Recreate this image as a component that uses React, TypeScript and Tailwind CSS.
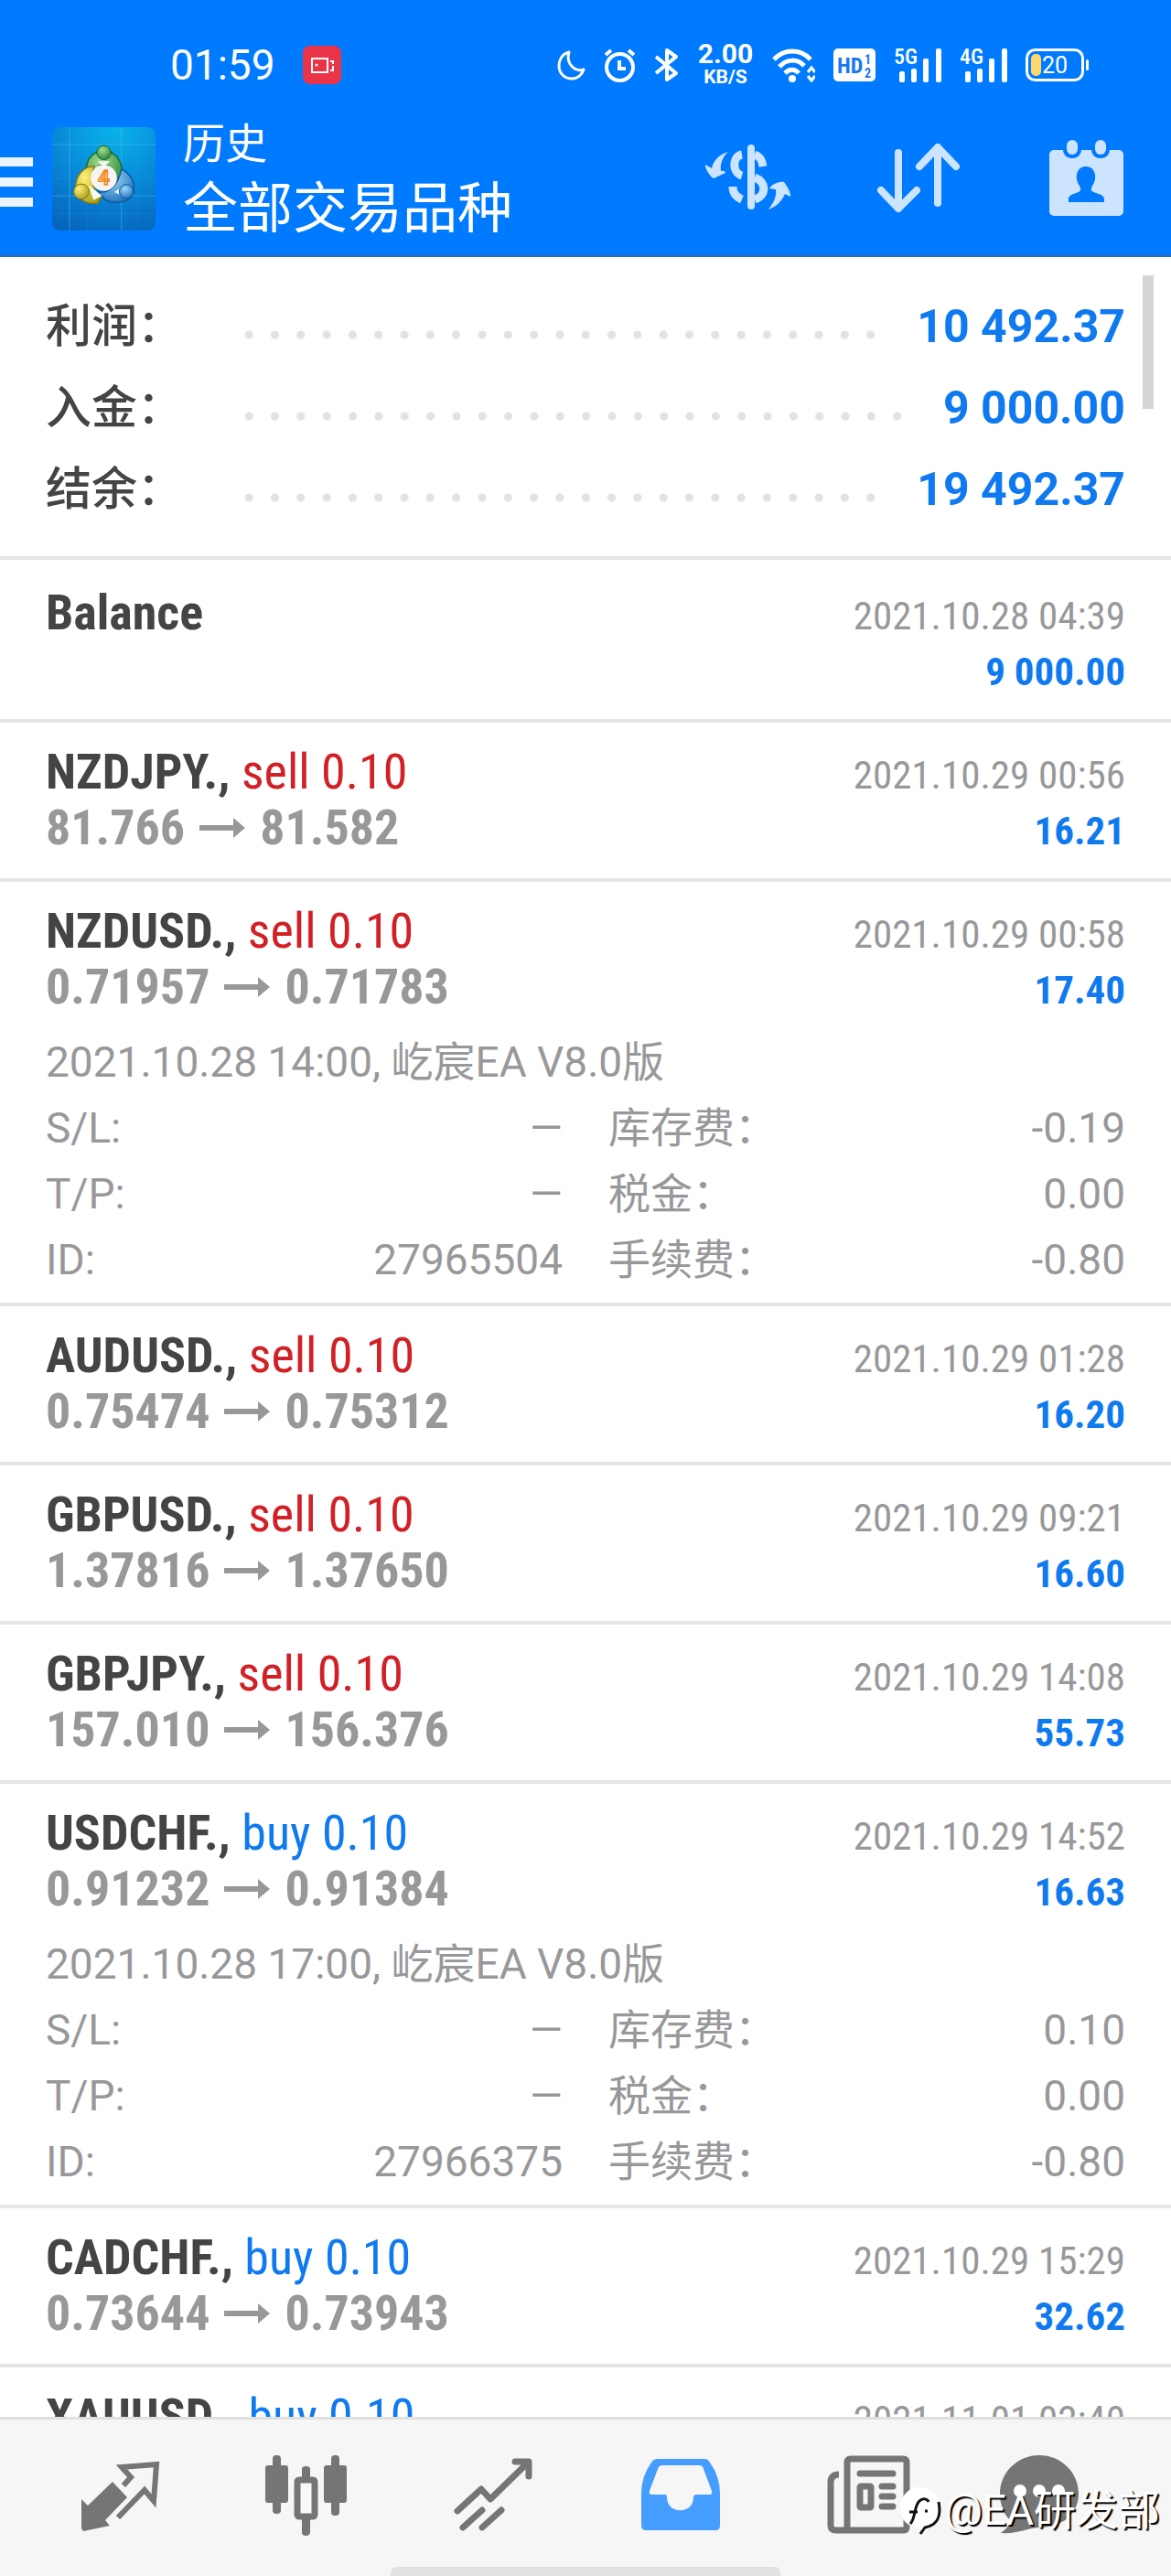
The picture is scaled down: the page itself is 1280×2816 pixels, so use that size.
import type { ReactNode } from "react"

type Detail = {
  opened: string
  id: string
  swap: string
  taxes: string
  commission: string
}

type Deal = {
  symbol: string
  side?: "buy" | "sell"
  volume?: string
  from?: string
  to?: string
  time: string
  profit: string
  detail?: Detail
}

const summary = [
  { label: "利润：", value: "10 492.37" },
  { label: "入金：", value: "9 000.00" },
  { label: "结余：", value: "19 492.37" },
]

const deals: Deal[] = [
  { symbol: "Balance", time: "2021.10.28 04:39", profit: "9 000.00" },
  { symbol: "NZDJPY.", side: "sell", volume: "0.10", from: "81.766", to: "81.582", time: "2021.10.29 00:56", profit: "16.21" },
  {
    symbol: "NZDUSD.",
    side: "sell",
    volume: "0.10",
    from: "0.71957",
    to: "0.71783",
    time: "2021.10.29 00:58",
    profit: "17.40",
    detail: { opened: "2021.10.28 14:00, 屹宸EA V8.0版", id: "27965504", swap: "-0.19", taxes: "0.00", commission: "-0.80" },
  },
  { symbol: "AUDUSD.", side: "sell", volume: "0.10", from: "0.75474", to: "0.75312", time: "2021.10.29 01:28", profit: "16.20" },
  { symbol: "GBPUSD.", side: "sell", volume: "0.10", from: "1.37816", to: "1.37650", time: "2021.10.29 09:21", profit: "16.60" },
  { symbol: "GBPJPY.", side: "sell", volume: "0.10", from: "157.010", to: "156.376", time: "2021.10.29 14:08", profit: "55.73" },
  {
    symbol: "USDCHF.",
    side: "buy",
    volume: "0.10",
    from: "0.91232",
    to: "0.91384",
    time: "2021.10.29 14:52",
    profit: "16.63",
    detail: { opened: "2021.10.28 17:00, 屹宸EA V8.0版", id: "27966375", swap: "0.10", taxes: "0.00", commission: "-0.80" },
  },
  { symbol: "CADCHF.", side: "buy", volume: "0.10", from: "0.73644", to: "0.73943", time: "2021.10.29 15:29", profit: "32.62" },
  { symbol: "XAUUSD.", side: "buy", volume: "0.10", time: "2021.11.01 02:40", profit: "" },
]

function Signal({ label }: { label: string }) {
  return (
    <svg className="overflow-visible font-['Roboto_Condensed',Roboto,sans-serif]" width="52" height="38" viewBox="0 0 52 38" fill="#fff">
      <text x="0" y="18" fontSize="24" fontWeight="500">{label}</text>
      <rect x="6" y="26" width="6" height="12" rx="2" />
      <rect x="19" y="23" width="6" height="15" rx="2" />
      <rect x="32" y="12" width="6" height="26" rx="2" />
      <rect x="46" y="1" width="6" height="37" rx="2" />
    </svg>
  )
}

function StatusBar() {
  return (
    <div className="flex h-[139px] items-center pt-[3px] pr-[90px] pl-[186px] text-white">
      <span className="text-[46px] leading-[56px]">01:59</span>
      <svg className="ml-[30px]" width="42" height="42" viewBox="0 0 42 42">
        <rect width="42" height="42" rx="8" fill="#ea3447" />
        <g fill="none" stroke="#fff" strokeWidth="2">
          <rect x="10" y="14" width="17" height="15" />
          <path d="M30 17h3v3M33 22v5h-3" />
        </g>
        <circle cx="15" cy="21" r="1.5" fill="#fff" />
      </svg>
      <div className="ml-auto flex items-center gap-5">
        <svg width="31" height="34" viewBox="0 0 31 34" fill="none" stroke="#fff" strokeWidth="3" strokeLinejoin="round">
          <path d="M13 3C5 5 2 12 2 18C2 26 8 32 16 32C22 32 27 28 29 22C20 25 9 16 13 3Z" />
        </svg>
        <svg width="35" height="38" viewBox="0 0 35 38" fill="none" stroke="#fff" strokeWidth="4">
          <circle cx="17.5" cy="21.5" r="14.5" />
          <path d="M17 14v9h7M2 8l6-5M33 8l-6-5" />
        </svg>
        <svg width="27" height="38" viewBox="0 0 27 38" fill="none" stroke="#fff" strokeWidth="4">
          <path d="M2 10L24 28L14 35V3L24 10L2 28" strokeLinejoin="round" />
        </svg>
        <div className="flex w-[62px] flex-col items-center pb-1 font-bold">
          <span className="text-[30px] leading-[30px]">2.00</span>
          <span className="text-[21px] leading-[21px]">KB/S</span>
        </div>
        <svg width="47" height="38" viewBox="0 0 47 38" fill="none" stroke="#fff" strokeWidth="5">
          <path d="M2 13C13 1 31 1 42 13" />
          <path d="M8 21C16 12 28 12 35 20" />
          <path d="M14 28C19 23 25 23 29 28" />
          <circle cx="22" cy="34" r="4" fill="#fff" stroke="none" />
          <path d="M39 27l4-5l4 5M39 31l4 5l4-5" strokeWidth="3" />
        </svg>
        <svg className="font-['Roboto_Condensed',Roboto,sans-serif]" width="46" height="38" viewBox="0 0 46 38" fontWeight="700" fill="#1878ee">
          <rect y="1" width="46" height="36" rx="5" fill="#fff" />
          <text x="4" y="28" fontSize="24">HD</text>
          <text x="34" y="18" fontSize="14">1</text>
          <text x="34" y="33" fontSize="14">2</text>
        </svg>
        <Signal label="5G" />
        <Signal label="4G" />
        <svg width="69" height="38" viewBox="0 0 69 38">
          <rect x="1.5" y="2.5" width="61" height="33" rx="9" fill="none" stroke="#fff" strokeWidth="3" />
          <rect x="6" y="7" width="11" height="24" rx="5" fill="#ffd76b" />
          <rect x="66" y="13" width="3" height="12" rx="1.5" fill="#fff" />
          <text x="18" y="28" fontSize="25" fill="#fff">20</text>
        </svg>
      </div>
    </div>
  )
}

function AppLogo() {
  return (
    <svg className="ml-[21px] shrink-0" width="113" height="113" viewBox="0 0 340 340">
      <defs>
        <radialGradient id="sky" cx="0.6" cy="0" r="1.1">
          <stop offset="0" stopColor="#08b4ea" />
          <stop offset="0.6" stopColor="#0882d4" />
          <stop offset="1" stopColor="#0664bb" />
        </radialGradient>
        <radialGradient id="green" cx="0.4" cy="0.3" r="0.8">
          <stop offset="0" stopColor="#a5dc8c" />
          <stop offset="1" stopColor="#1d7f35" />
        </radialGradient>
        <radialGradient id="yellow" cx="0.35" cy="0.3" r="0.8">
          <stop offset="0" stopColor="#fff07a" />
          <stop offset="1" stopColor="#a89a13" />
        </radialGradient>
        <radialGradient id="blue" cx="0.4" cy="0.3" r="0.8">
          <stop offset="0" stopColor="#9ad8fb" />
          <stop offset="1" stopColor="#1668b4" />
        </radialGradient>
      </defs>
      <rect width="340" height="340" rx="26" fill="url(#sky)" />
      <path d="M57 0V340M228 0V340M0 57H340M0 226H340" stroke="#6fd0f5" strokeOpacity="0.4" strokeWidth="3" />
      <path d="M114 0V340M171 0V340M285 0V340M0 114H340M0 170H340M0 283H340" stroke="#6fd0f5" strokeOpacity="0.15" strokeWidth="2" />
      <path d="M112 152C108 100 140 78 170 78C204 78 234 108 230 160L208 200C212 150 200 124 170 124C150 124 140 140 138 152Z" fill="url(#green)" stroke="#14622c" strokeWidth="4" />
      <path d="M138 128C100 130 76 160 76 205C84 236 110 256 150 250L164 226C140 216 124 190 138 128Z" fill="url(#yellow)" stroke="#847809" strokeWidth="4" />
      <path d="M228 138C262 156 272 184 268 214C258 246 216 256 176 240L150 212C180 220 216 200 228 138Z" fill="url(#blue)" stroke="#0d539b" strokeWidth="4" />
      <path d="M120 190L136 240L164 226ZM204 214L240 190L232 226ZM150 112H190L170 132Z" fill="#f4faf4" />
      <circle cx="170" cy="84" r="23" fill="url(#green)" stroke="#14622c" strokeWidth="3" />
      <circle cx="96" cy="212" r="25" fill="url(#yellow)" stroke="#847809" strokeWidth="3" />
      <circle cx="244" cy="212" r="23" fill="url(#blue)" stroke="#0d539b" strokeWidth="3" />
      <circle cx="170" cy="167" r="43" fill="#f7f5f3" />
      <text x="170" y="191" fontSize="68" fontWeight="700" textAnchor="middle" fill="#fbc98c" stroke="#ee8a24" strokeWidth="4">4</text>
    </svg>
  )
}

function Toolbar() {
  return (
    <div className="flex h-[139px] items-start pr-[42px] text-white">
      <button type="button" aria-label="Menu" className="mt-[33px] flex w-9 flex-col gap-3">
        <span className="h-[10px] bg-[#ecf4ff]" />
        <span className="h-[10px] bg-[#ecf4ff]" />
        <span className="h-[10px] bg-[#ecf4ff]" />
      </button>
      <AppLogo />
      <h1 className="-mt-[10px] ml-[30px] font-normal">
        <span className="block text-[46px] leading-[56px]">历史</span>
        <span className="block text-[60px] leading-[88px]">全部交易品种</span>
      </h1>
      <div className="mt-[14px] ml-auto flex gap-[85px]">
        <button type="button" aria-label="Currency">
          <svg width="100" height="84" viewBox="0 0 100 84" fill="none" stroke="#cce4ff" strokeWidth="9">
            <path d="M53 9V72" strokeWidth="8" strokeLinecap="round" />
            <path d="M43 16C32 18 32 36 43 39M33 51C33 58 36 62 43 65" />
            <path d="M57 16C63 18 65 22 66 29" />
            <path d="M57 41C70 46 70 61 57 65" />
            <g fill="#cce4ff" stroke="none">
              <path d="M28 13C18 16 12 22 10 31L3 27C2 30 8 40 12 42L25 36C24 33 22 34 20 34C19 26 22 18 28 13Z" />
              <path d="M72 76C78 68 81 62 80 54L73 53C76 48 84 45 89 46C91 49 97 57 96 62L90 59C86 68 80 73 72 76Z" />
            </g>
          </svg>
        </button>
        <button type="button" aria-label="Sort">
          <svg width="100" height="84" viewBox="-6 -2 100 84" fill="none" stroke="#cce4ff" strokeWidth="8" strokeLinecap="round" strokeLinejoin="round">
            <path d="M23 12V73M4 53L23 73L43 53" />
            <path d="M66 67V6M46 27L66 6L86 27" />
          </svg>
        </button>
        <button type="button" aria-label="Period">
          <svg width="100" height="84" viewBox="-8 1 100 84">
            <rect x="1" y="12" width="81" height="72" rx="5" fill="#cce4ff" />
            <rect x="16" y="-4" width="20" height="25" rx="9" fill="#007aff" />
            <rect x="47" y="-4" width="20" height="25" rx="9" fill="#007aff" />
            <rect x="20" y="1" width="12" height="16" rx="6" fill="#cce4ff" />
            <rect x="51" y="1" width="12" height="16" rx="6" fill="#cce4ff" />
            <path d="M41 30C33 30 30 37 31 44C32 50 36 52 35 56C33 60 22 59 22 66V69H61V66C61 59 49 60 47 56C46 52 50 50 51 44C52 37 49 30 41 30Z" fill="#007aff" />
          </svg>
        </button>
      </div>
    </div>
  )
}

function Field({ label, children }: { label: string; children: ReactNode }) {
  return (
    <div className="flex justify-between">
      <dt>{label}</dt>
      <dd>{children}</dd>
    </div>
  )
}

function DealRow({ deal }: { deal: Deal }) {
  const { detail } = deal
  return (
    <li className="border-b-4 border-[#e5e5e5] px-[50px] pt-[23px] first:pt-[27px]">
      <div className="font-['Roboto_Condensed','Liberation_Sans_Narrow',Roboto,sans-serif] leading-[61px]">
        <div className="flex h-[61px] items-baseline justify-between">
          <h2 className="text-[54px] font-bold text-[#444]">
            {deal.symbol}
            {deal.side && (
              <>
                ,{" "}
                <span className={deal.side === "sell" ? "font-normal text-[#d12026]" : "font-normal text-[#0f7af0]"}>
                  {deal.side} {deal.volume}
                </span>
              </>
            )}
          </h2>
          <time className="text-[43px] text-[#98989a]">{deal.time}</time>
        </div>
        <div className="flex h-[61px] items-baseline justify-between">
          <p className="flex items-center gap-4 text-[54px] font-bold text-[#98989a]">
            {deal.from ? (
              <>
                {deal.from}
                <svg width="50" height="22" viewBox="0 0 50 22" fill="#98989a" aria-label="to">
                  <path d="M0 8H37V0L50 11L37 22V14H0Z" />
                </svg>
                {deal.to}
              </>
            ) : (
              "\u00a0"
            )}
          </p>
          <p className="text-[43px] font-bold text-[#0f7af0]">{deal.profit}</p>
        </div>
      </div>
      {detail ? (
        <div className="mt-4 pb-[11px] text-[46px] leading-[72px] text-[#98989a]">
          <p>{detail.opened}</p>
          <dl className="grid grid-cols-2 gap-x-[50px]">
            <Field label="S/L:">—</Field>
            <Field label="库存费：">{detail.swap}</Field>
            <Field label="T/P:">—</Field>
            <Field label="税金：">{detail.taxes}</Field>
            <Field label="ID:">{detail.id}</Field>
            <Field label="手续费：">{detail.commission}</Field>
          </dl>
        </div>
      ) : (
        <div className="h-[25px]" />
      )}
    </li>
  )
}

const tabs = [
  {
    name: "Quotes",
    icon: (
      <>
        <path d="M19 51L26 58L53 32L69 49L45 74L50 80L21 86L19 83Z" fill="#757575" />
        <path d="M65 36L73 27L63 16L101 13L98 53L88 41L59 71" fill="none" stroke="#757575" strokeWidth="6" />
      </>
    ),
  },
  {
    name: "Charts",
    icon: (
      <g fill="#757575">
        <rect x="24" y="3" width="9" height="64" rx="4" />
        <rect x="16" y="14" width="25" height="41" rx="3" />
        <rect x="88" y="3" width="9" height="66" rx="4" />
        <rect x="80" y="14" width="25" height="41" rx="3" />
        <path d="M56 30V18Q56 15 60 15Q65 15 65 18V30ZM56 70V87Q56 91 60 91Q65 91 65 87V70Z" />
        <rect x="51" y="30" width="19" height="40" rx="2" fill="#fafafa" stroke="#757575" strokeWidth="7" />
      </g>
    ),
  },
  {
    name: "Trade",
    icon: (
      <g fill="none" stroke="#757575" strokeWidth="7" strokeLinecap="round">
        <path d="M22 64L48 40L58 51L99 11M85 10H100V26" strokeLinejoin="round" />
        <path d="M28 82L49 63M49 82L70 63" />
      </g>
    ),
  },
  {
    name: "History",
    icon: (
      <path
        fill="#459dff"
        fillRule="evenodd"
        d="M37 7H88Q92 7 94 11Q105 26 105 45V80Q105 85 100 85H24Q19 85 19 80V45Q19 26 30 11Q32 7 37 7ZM42 14Q38 14 37 18L28 42Q27 46 31 46H45Q47 46 47 49C47 68 76 68 76 49Q76 46 79 46H93Q97 46 96 42L87 18Q86 14 82 14Z"
      />
    ),
  },
  {
    name: "News",
    icon: (
      <g fill="none" stroke="#757575" strokeWidth="7">
        <path d="M31 24Q22 24 22 33V80Q22 85 28 85H102Q105 85 105 81V11Q105 7 101 7H44Q40 7 40 11V85" strokeLinejoin="round" />
        <path d="M54 23H90M78 37H90M78 48H90M78 59H90" strokeLinecap="round" />
        <rect x="54" y="37" width="12" height="23" rx="1" />
      </g>
    ),
  },
  {
    name: "Messages",
    icon: (
      <>
        <path d="M46 3C70 3 89 22 89 45C89 68 70 82 46 82C34 82 20 90 4 88C9 84 14 80 14 74C7 67 3 56 3 45C3 22 22 3 46 3Z" fill="#757575" />
        <circle cx="25" cy="42" r="7" fill="#fff" />
        <circle cx="46" cy="42" r="7" fill="#fff" />
        <circle cx="67" cy="42" r="7" fill="#fff" />
      </>
    ),
  },
]

function TabBar() {
  return (
    <nav className="relative h-[174px] shrink-0 border-t-3 border-[#e0e0e0] bg-[#f6f6f6] px-7 pt-9">
      <div className="flex justify-around">
        {tabs.map((tab) => (
          <button key={tab.name} type="button" aria-label={tab.name}>
            <svg width="120" height="96" viewBox="0 0 120 96">{tab.icon}</svg>
          </button>
        ))}
      </div>
      {/* gesture bar */}
      <div className="absolute bottom-0 left-1/2 h-[10px] w-[426px] -translate-x-1/2 rounded-t-md bg-[#e2e2e2]" />
      {/* watermark */}
      <div className="absolute right-[12px] bottom-[42px] flex items-center gap-1 text-[46px] leading-[60px] text-white [text-shadow:2px_2px_1px_#000]">
        <svg width="46" height="54" viewBox="0 0 46 54">
          <path d="M22 2C36 2 45 12 45 26C45 42 36 46 24 52V46C10 46 1 38 1 25C1 12 10 2 22 2Z" fill="#fff" />
          <path d="M12 42C18 36 16 22 22 17C26 13 31 15 32 18M11 29H20M43 18C47 38 38 44 28 46L23 53M28 28H31" fill="none" stroke="#111" strokeWidth="3" />
        </svg>
        @EA研发部
      </div>
    </nav>
  )
}

export default function App() {
  return (
    <div className="flex h-screen flex-col overflow-hidden bg-white font-[Roboto,'Noto_Sans_CJK_SC',sans-serif]">
      <header className="shrink-0 border-b-3 border-[#1e70cf] bg-[#007aff]">
        <StatusBar />
        <Toolbar />
      </header>
      <main className="relative min-h-0 flex-1 overflow-hidden">
        <dl className="border-b-4 border-[#e5e5e5] px-[50px] pt-8 pb-7 text-[50px] leading-[89px] font-medium">
          {summary.map((item) => (
            <div key={item.label} className="flex items-center">
              <dt className="w-[208px] shrink-0 text-[#444]">{item.label}</dt>
              <span className="mt-4 h-[10px] flex-1 bg-[radial-gradient(circle,#e2e2e2_4px,transparent_5px)] bg-[length:28px_10px] [background-repeat:round_no-repeat]" />
              <dd className="ml-9 font-bold text-[#0f7af0]">{item.value}</dd>
            </div>
          ))}
        </dl>
        <ul>
          {deals.map((deal) => (
            <DealRow key={deal.symbol} deal={deal} />
          ))}
        </ul>
        {/* scroll thumb */}
        <div className="absolute top-5 right-[19px] h-[146px] w-3 bg-[#d5d5d5]" />
      </main>
      <TabBar />
    </div>
  )
}
